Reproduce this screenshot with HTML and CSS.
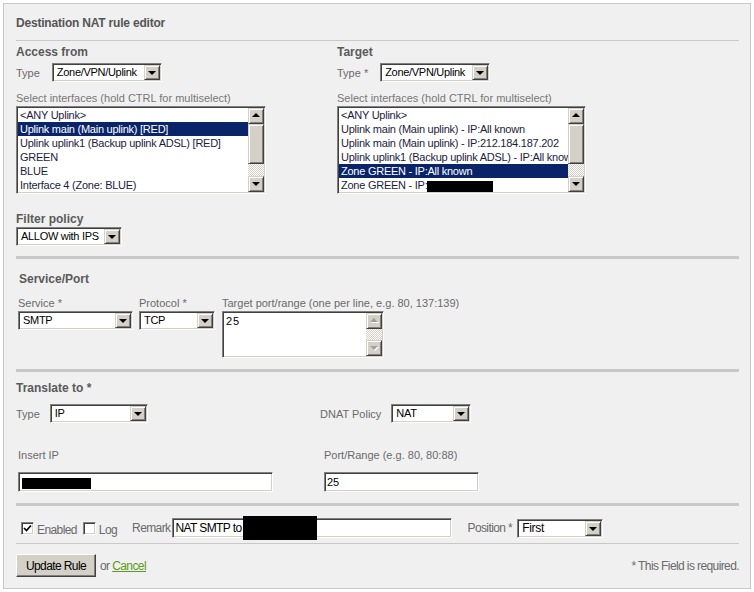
FILE: index.html
```html
<!DOCTYPE html>
<html lang="en">
<head>
    <meta charset="UTF-8">
    <title>Destination NAT rule editor</title>
    <link rel="stylesheet" href="styles.css">
</head>
<body>

<div class="editor">
    <div class="editor-title">Destination NAT rule editor</div>
    <div class="rule rule-top"></div>

    <div class="cols">
        <div class="col">
            <h3 class="section-title">Access from</h3>
            <div class="inline-field">
                <span class="field-label">Type</span>
                <div class="combo w-type"><span class="combo-value">Zone/VPN/Uplink</span><span class="combo-drop"></span></div>
            </div>
            <div class="hint">Select interfaces (hold CTRL for multiselect)</div>
            <div class="listbox lb-from">
                <ul class="options">
                    <li>&lt;ANY Uplink&gt;</li>
                    <li class="selected">Uplink main (Main uplink) [RED]</li>
                    <li>Uplink uplink1 (Backup uplink ADSL) [RED]</li>
                    <li>GREEN</li>
                    <li>BLUE</li>
                    <li>Interface 4 (Zone: BLUE)</li>
                </ul>
                <div class="vscroll">
                    <span class="sb-btn sb-up"></span>
                    <span class="sb-thumb"></span>
                    <span class="sb-track"></span>
                    <span class="sb-btn sb-down"></span>
                </div>
            </div>
        </div>
        <div class="col">
            <h3 class="section-title">Target</h3>
            <div class="inline-field">
                <span class="field-label">Type *</span>
                <div class="combo w-type"><span class="combo-value">Zone/VPN/Uplink</span><span class="combo-drop"></span></div>
            </div>
            <div class="hint">Select interfaces (hold CTRL for multiselect)</div>
            <div class="listbox lb-target">
                <ul class="options">
                    <li>&lt;ANY Uplink&gt;</li>
                    <li>Uplink main (Main uplink) - IP:All known</li>
                    <li>Uplink main (Main uplink) - IP:212.184.187.202</li>
                    <li>Uplink uplink1 (Backup uplink ADSL) - IP:All known</li>
                    <li class="selected">Zone GREEN - IP:All known</li>
                    <li>Zone GREEN - IP:<span class="redact redact-row"></span></li>
                </ul>
                <div class="vscroll">
                    <span class="sb-btn sb-up"></span>
                    <span class="sb-thumb"></span>
                    <span class="sb-track"></span>
                    <span class="sb-btn sb-down"></span>
                </div>
            </div>
        </div>
    </div>

    <div class="filter">
        <h3 class="section-title">Filter policy</h3>
        <div class="combo w-filter"><span class="combo-value">ALLOW with IPS</span><span class="combo-drop"></span></div>
    </div>

    <div class="rule rule-thick sep-filter"></div>

    <h3 class="section-title service-title">Service/Port</h3>
    <div class="service-row">
        <div class="stack">
            <span class="field-label">Service *</span>
            <div class="combo w-service"><span class="combo-value">SMTP</span><span class="combo-drop"></span></div>
        </div>
        <div class="stack">
            <span class="field-label">Protocol *</span>
            <div class="combo w-proto"><span class="combo-value">TCP</span><span class="combo-drop"></span></div>
        </div>
        <div class="stack">
            <span class="field-label">Target port/range (one per line, e.g. 80, 137:139)</span>
            <div class="textarea">
                <div class="textarea-text">25</div>
                <div class="vscroll disabled">
                    <span class="sb-btn sb-up"></span>
                    <span class="sb-track"></span>
                    <span class="sb-btn sb-down"></span>
                </div>
            </div>
        </div>
    </div>

    <div class="rule rule-thick sep-service"></div>

    <h3 class="section-title translate-title">Translate to *</h3>
    <div class="translate-grid">
        <div class="inline-field">
            <span class="field-label">Type</span>
            <div class="combo w-ttype"><span class="combo-value">IP</span><span class="combo-drop"></span></div>
        </div>
        <div class="inline-field">
            <span class="field-label">DNAT Policy</span>
            <div class="combo w-dnat"><span class="combo-value">NAT</span><span class="combo-drop"></span></div>
        </div>
    </div>
    <div class="address-grid">
        <div class="stack">
            <span class="field-label">Insert IP</span>
            <div class="textbox w-ip"><span class="redact redact-ip"></span></div>
        </div>
        <div class="stack">
            <span class="field-label">Port/Range (e.g. 80, 80:88)</span>
            <div class="textbox w-port">25</div>
        </div>
    </div>

    <div class="rule rule-thick sep-translate"></div>

    <div class="options-row">
        <span class="checkbox checked"><svg width="9" height="9" viewBox="0 0 9 9"><path d="M1 4 L3.5 6.5 L8 1.5" fill="none" stroke="#000" stroke-width="1.7"/></svg></span>
        <span class="opt-label">Enabled</span>
        <span class="checkbox cb-log"></span>
        <span class="opt-label">Log</span>
        <span class="opt-label remark-label">Remark</span>
        <div class="textbox w-remark">NAT SMTP to<span class="redact redact-remark"></span></div>
        <span class="opt-label position-label">Position *</span>
        <div class="combo w-position"><span class="combo-value">First</span><span class="combo-drop"></span></div>
    </div>

    <div class="rule rule-bottom"></div>

    <div class="footer">
        <button class="submit">Update Rule</button>
        <span class="or">or <a href="#">Cancel</a></span>
        <span class="required-note">* This Field is required.</span>
    </div>
</div>

</body>
</html>
```

FILE: styles.css
```css
body {
    margin: 0;
    background: #fff;
    font-family: "Liberation Sans", Arial, sans-serif;
    font-size: 11px;
    color: #6a6a6a;
}
.editor {
    box-sizing: border-box;
    width: 748px;
    margin: 3px;
    padding: 12px 11px 11px 12px;
    background: #f0f0f0;
    border: 1px solid #c8c8c8;
}
.editor-title {
    font-size: 12px;
    font-weight: bold;
    line-height: 14px;
    letter-spacing: -0.2px;
    color: #555;
}
.rule {
    height: 1px;
    background: #c8c8c8;
}
.rule-thick {
    height: 3px;
}
.rule-top {
    margin-top: 10px;
}
.section-title {
    margin: 0;
    font-size: 12px;
    font-weight: bold;
    line-height: 14px;
    color: #5a5a5a;
}
.field-label {
    line-height: 14px;
    white-space: nowrap;
}

/* columns */
.cols {
    display: grid;
    grid-template-columns: 321px 1fr;
    margin-top: 4px;
}
.inline-field {
    display: flex;
    align-items: center;
    gap: 12px;
    margin-top: 4px;
}
.hint {
    margin-top: 9px;
    line-height: 14px;
    color: #777;
}

/* combo boxes */
.combo {
    box-sizing: border-box;
    display: flex;
    height: 19px;
    background: #fff;
    border: 1px solid;
    border-color: #808080 #fff #fff #808080;
    box-shadow: inset 1px 1px #404040, inset -1px -1px #d4d0c8;
    padding: 1px;
    color: #000;
}
.combo-value {
    flex: 1;
    padding-left: 3px;
    line-height: 15px;
    letter-spacing: -0.3px;
    white-space: nowrap;
    overflow: hidden;
}
.combo-drop,
.sb-btn {
    box-sizing: border-box;
    position: relative;
    width: 16px;
    height: 15px;
    flex: none;
    background: #d4d0c8;
    border: 1px solid;
    border-color: #d4d0c8 #404040 #404040 #d4d0c8;
    box-shadow: inset 1px 1px #fff, inset -1px -1px #808080;
}
.combo-drop::before,
.sb-down::before,
.sb-up::before {
    content: "";
    position: absolute;
    left: 3px;
    top: 5px;
    border-left: 4px solid transparent;
    border-right: 4px solid transparent;
    border-top: 4px solid #000;
}
.sb-up::before {
    top: 4px;
    border-top: 0;
    border-bottom: 4px solid #000;
}
.w-type { width: 110px; }
.w-filter { width: 106px; }
.w-service { width: 115px; }
.w-proto { width: 76px; }
.w-ttype { width: 98px; }
.w-dnat { width: 80px; }
.w-position { width: 86px; }

/* list boxes */
.listbox {
    box-sizing: border-box;
    display: flex;
    height: 88px;
    margin-top: 1px;
    background: #fff;
    border: 1px solid;
    border-color: #808080 #fff #fff #808080;
    box-shadow: inset 1px 1px #404040, inset -1px -1px #d4d0c8;
    padding: 1px;
}
.lb-from { width: 250px; }
.lb-target { width: 249px; }
.options {
    flex: 1;
    min-width: 0;
    margin: 0;
    padding: 0;
    list-style: none;
    color: #1c1c3c;
    letter-spacing: -0.25px;
}
.options li {
    height: 14px;
    line-height: 14px;
    padding-left: 2px;
    white-space: nowrap;
    overflow: hidden;
}
.options li.selected {
    background: #0a246a;
    color: #fff;
}
.vscroll {
    display: flex;
    flex-direction: column;
    width: 16px;
    flex: none;
}
.vscroll .sb-btn {
    height: 16px;
}
.sb-thumb {
    box-sizing: border-box;
    height: 40px;
    background: #d4d0c8;
    border: 1px solid;
    border-color: #d4d0c8 #404040 #404040 #d4d0c8;
    box-shadow: inset 1px 1px #fff, inset -1px -1px #808080;
}
.sb-track {
    flex: 1;
    background: repeating-conic-gradient(#fff 0 25%, #d4d0c8 0 50%) 0 0 / 2px 2px;
}
.vscroll.disabled .sb-btn::before {
    border-top-color: #a0a0a0;
    filter: drop-shadow(1px 1px 0 #fff);
}
.vscroll.disabled .sb-up::before {
    border-bottom-color: #a0a0a0;
}

.redact {
    display: inline-block;
    background: #000;
    vertical-align: middle;
}
.redact-row {
    width: 66px;
    height: 11px;
}

/* filter */
.filter {
    margin-top: 18px;
}
.filter .combo {
    margin-top: 1px;
}
.sep-filter {
    margin-top: 10px;
}

/* service/port */
.service-title {
    margin-top: 13px;
    padding-left: 3px;
}
.service-row {
    display: flex;
    gap: 6px;
    margin-top: 10px;
    padding-left: 2px;
}
.service-row .stack:last-child {
    margin-left: 1px;
}
.stack {
    display: flex;
    flex-direction: column;
    align-items: flex-start;
    gap: 1px;
}
.textarea {
    box-sizing: border-box;
    display: flex;
    width: 162px;
    height: 47px;
    background: #fff;
    border: 1px solid;
    border-color: #808080 #fff #fff #808080;
    box-shadow: inset 1px 1px #404040, inset -1px -1px #d4d0c8;
    padding: 1px;
    color: #000;
}
.textarea-text {
    flex: 1;
    padding: 2px 2px;
    letter-spacing: 1px;
}
.sep-service {
    margin-top: 11px;
}

/* translate */
.translate-title {
    margin-top: 9px;
}
.translate-grid {
    display: grid;
    grid-template-columns: 304px 1fr;
    margin-top: 9px;
}
.translate-grid .inline-field {
    margin-top: 0;
    gap: 10px;
}
.address-grid {
    display: grid;
    grid-template-columns: 306px 1fr;
    margin-top: 25px;
    padding-left: 2px;
}
.address-grid .stack {
    gap: 10px;
}
.textbox {
    box-sizing: border-box;
    position: relative;
    height: 20px;
    background: #fff;
    border: 1px solid;
    border-color: #808080 #fff #fff #808080;
    box-shadow: inset 1px 1px #404040, inset -1px -1px #d4d0c8;
    padding: 1px 3px;
    line-height: 16px;
    color: #000;
    white-space: nowrap;
}
.w-ip { width: 255px; }
.w-port { width: 155px; padding-left: 2px; }
.redact-ip {
    width: 69px;
    height: 11px;
}
.sep-translate {
    margin-top: 11px;
}

/* options row */
.options-row,
.footer {
    display: flex;
    align-items: center;
    font-size: 12px;
    letter-spacing: -0.6px;
}
.options-row {
    height: 20px;
    margin-top: 12px;
}
.checkbox {
    box-sizing: border-box;
    display: inline-flex;
    align-items: center;
    justify-content: center;
    width: 13px;
    height: 13px;
    margin-left: 5px;
    margin-right: 3px;
    background: #fff;
    border: 1px solid;
    border-color: #808080 #fff #fff #808080;
    box-shadow: inset 1px 1px #404040, inset -1px -1px #d4d0c8;
}
.cb-log {
    margin-left: 6px;
}
.opt-label {
    margin-top: 4px;
    line-height: 14px;
}
.remark-label {
    margin-left: 15px;
    margin-right: 2px;
    margin-top: 0;
}
.w-remark {
    width: 280px;
    height: 20px;
    padding-left: 2px;
}
.redact-remark {
    position: absolute;
    left: 70px;
    top: -3px;
    width: 74px;
    height: 24px;
}
.position-label {
    margin-left: 15px;
    margin-right: 5px;
    margin-top: 0;
}
.w-position {
    height: 19px;
}

.rule-bottom {
    margin-top: 5px;
}

/* footer */
.footer {
    margin-top: 10px;
}
.submit {
    box-sizing: border-box;
    width: 80px;
    height: 23px;
    padding: 0;
    background: #d4d0c8;
    border: 1px solid;
    border-color: #fff #404040 #404040 #fff;
    box-shadow: inset -1px -1px #808080;
    font-family: inherit;
    font-size: 12px;
    letter-spacing: -0.6px;
    color: #000;
}
.or {
    margin-left: 4px;
}
.or a {
    color: #5c9a18;
}
.required-note {
    margin-left: auto;
}
```
